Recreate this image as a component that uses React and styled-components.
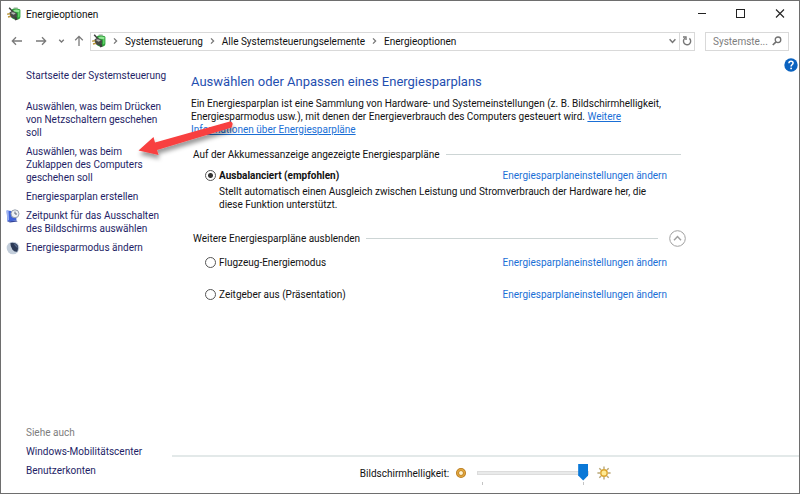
import React, { useState } from 'react';
import styled, { createGlobalStyle, css } from 'styled-components';

const colors = {
  border: '#6e6e6e',
  text: '#111111',
  navy: '#1e1e66',
  link: '#1a6fd6',
  heading: '#1f4fb0',
  muted: '#7d7d7d',
  line: '#cdd5d5',
  box: '#d9d9d9',
  accent: '#0a78d7',
};

const GlobalStyle = createGlobalStyle`
  * {
    box-sizing: border-box;
  }

  body {
    margin: 0;
    background: #ffffff;
  }

  body, button, input {
    font-family: Roboto, 'Noto Sans', sans-serif;
    font-size: 10px;
    line-height: 13px;
    color: ${colors.text};
  }
`;

const Window = styled.div`
  position: relative;
  display: flex;
  flex-direction: column;
  min-height: 100vh;
  border: 1px solid ${colors.border};
  background: #ffffff;
`;

const IconButton = styled.button`
  display: flex;
  align-items: center;
  justify-content: center;
  flex: none;
  width: ${({ $width }) => $width || 18}px;
  height: ${({ $height }) => $height || 18}px;
  padding: 0;
  border: 0;
  background: none;
`;

const TitleBar = styled.header`
  display: flex;
  align-items: center;
  height: 26px;
  padding-left: 6px;
`;

const Title = styled.h1`
  flex: 1;
  margin: 0 0 0 5px;
  font-size: 10px;
  font-weight: 400;
`;

const NavBar = styled.nav`
  display: flex;
  align-items: center;
  height: 28px;
  padding: 0 10px 0 7px;
`;

const NavButtons = styled.div`
  display: flex;
  align-items: center;
  gap: 6px;
  padding-right: 4px;
`;

const AddressBar = styled.div`
  display: flex;
  flex: 1;
  align-items: center;
  height: 19px;
  margin-right: 10px;
  padding-left: 1px;
  border: 1px solid ${colors.box};
`;

const Crumbs = styled.ol`
  display: flex;
  flex: 1;
  align-items: center;
  margin: 0;
  padding: 0;
  list-style: none;
`;

const Crumb = styled.li`
  display: flex;
  align-items: center;

  svg {
    margin: 0 6px;
  }

  a {
    color: inherit;
    text-decoration: none;
  }
`;

const RefreshButton = styled(IconButton)`
  height: 17px;
  border-left: 1px solid ${colors.box};
`;

const SearchBox = styled.label`
  display: flex;
  align-items: center;
  width: 84px;
  height: 19px;
  padding: 0 6px 0 7px;
  border: 1px solid ${colors.box};
`;

const SearchInput = styled.input`
  flex: 1;
  min-width: 0;
  padding: 0;
  border: 0;
  outline: 0;
  background: none;

  &::placeholder {
    color: ${colors.muted};
    opacity: 1;
  }
`;

const Body = styled.div`
  display: flex;
  flex: 1;
`;

const Sidebar = styled.aside`
  display: flex;
  flex-direction: column;
  justify-content: space-between;
  flex: none;
  width: 171px;
  padding: 14px 0 16px 5px;
`;

const LinkList = styled.ul`
  display: flex;
  flex-direction: column;
  gap: 6px;
  margin: 0;
  padding: 0;
  list-style: none;
`;

const SideItem = styled.li`
  display: grid;
  grid-template-columns: 14px 1fr;
  column-gap: 6px;
  color: ${colors.muted};
  ${({ $home }) => $home && css`margin-bottom: 12px;`}

  a {
    grid-column: 2;
    color: ${colors.navy};
    text-decoration: none;
    white-space: pre-line;
  }

  span {
    grid-column: 2;
  }
`;

const RightPane = styled.div`
  display: flex;
  flex: 1;
  flex-direction: column;
  min-width: 0;
`;

const Content = styled.div`
  display: flex;
  flex: 1;
  justify-content: space-between;
  padding: 2px 1px 0 19px;
`;

const Main = styled.main`
  flex: 1;
  max-width: 495px;
  padding-top: 16px;
`;

const Heading = styled.h2`
  margin: 0 0 6px;
  font-size: 13px;
  font-weight: 400;
  line-height: 18px;
  color: ${colors.heading};
`;

const Intro = styled.p`
  margin: 0 0 10px;
  white-space: pre-line;

  a {
    color: ${colors.link};
  }
`;

const GroupHeader = styled.div`
  display: flex;
  align-items: center;
  gap: 6px;
  height: 16px;
  padding-left: 2px;
`;

const Rule = styled.hr`
  flex: 1;
  height: 1px;
  margin: 0 5px 0 0;
  border: 0;
  background: ${colors.line};
`;

const PlanRow = styled.div`
  display: grid;
  grid-template-columns: 11px 1fr auto;
  column-gap: 3px;
  row-gap: 3px;
  align-items: center;
  margin-bottom: 19px;
  padding: 0 19px 0 14px;

  a {
    color: ${colors.link};
    text-decoration: none;
  }
`;

const Radio = styled.input`
  appearance: none;
  width: 11px;
  height: 11px;
  margin: 0;
  border: 1px solid #555555;
  border-radius: 50%;
  background: #ffffff;

  &:checked {
    background: radial-gradient(circle, #333333 0 2px, #ffffff 3px);
  }
`;

const PlanLabel = styled.label`
  font-weight: ${({ $strong }) => ($strong ? 700 : 400)};
`;

const PlanText = styled.p`
  grid-column: 2 / -1;
  margin: 0;
  white-space: pre-line;
`;

const PlanList = styled.div`
  padding-top: ${({ $top }) => $top}px;
`;

const Footer = styled.footer`
  display: flex;
  align-items: center;
  justify-content: center;
  gap: 6px;
  height: 38px;
  padding-bottom: 4px;
  border-top: 2px solid #e3e9e9;
`;

const SliderBox = styled.div`
  display: flex;
  flex-direction: column;
  gap: 1px;
  width: 112px;
  margin: 3px 2px 0 4px;
`;

const Slider = styled.input`
  appearance: none;
  width: 100%;
  height: 17px;
  margin: 0;
  background: none;

  &::-webkit-slider-runnable-track {
    height: 4px;
    border: 1px solid #dcdcdc;
    background: #e9eaea;
  }

  &::-webkit-slider-thumb {
    appearance: none;
    width: 10px;
    height: 17px;
    margin-top: -8px;
    background: ${colors.accent};
    clip-path: polygon(0 0, 100% 0, 100% 70%, 50% 100%, 0 70%);
  }
`;

const Ticks = styled.div`
  height: 3px;
  margin: 0 5px;
  border: solid #c4c4c4;
  border-width: 0 1px;
`;

const Arrow = styled.svg`
  position: absolute;
  left: 130px;
  top: 114px;
  pointer-events: none;
`;

const PowerIcon = () => (
  <svg width="14" height="14" viewBox="0 0 14 14" aria-hidden="true">
    <rect x="6.5" y="0.3" width="4.5" height="2.4" rx="1" fill="#b9c4b9" />
    <path d="M4.8 3Q5 1.6 9 1.6Q13.2 1.6 13.4 3.4V10Q13 12.8 9.4 12.8Q5.6 12.6 4.8 10.6Z" fill="#2fa03c" />
    <path d="M6.4 3.2Q9.2 2 12.6 3.3L12.2 5.8Q9.4 4.4 6.8 4.8Z" fill="#93e795" />
    <path d="M11 6L12.6 5.4V9.6L11 10.6Z" fill="#5fd066" />
    <path d="M2.2 0.8L5.6 4.4" stroke="#3c3f3c" strokeWidth="1.5" />
    <path d="M2.4 5.8Q4 3.6 6.6 4.2L10 6.6Q10.6 9.4 8 11Q5 11.6 3.2 9.8Z" fill="#474a47" />
    <path d="M3.8 6Q5.4 4.6 7.6 5.8L8.6 6.8L6.4 7.8Z" fill="#b4b7b4" />
    <path d="M0.2 7.2L3.2 6.6M1 10L4 9.2" stroke="#b9973a" strokeWidth="1.4" />
    <path d="M7 10.8L9.6 9.4L10.6 12.4L8.4 13.4Z" fill="#3d403d" />
  </svg>
);

const DisplayTimerIcon = () => (
  <svg width="14" height="14" viewBox="0 0 14 14" aria-hidden="true">
    <path d="M0.6 1.6L10.4 2.4V11.4L1.4 12.4Z" fill="#3f63d8" />
    <path d="M0.6 1.6L2.6 1.8L3 10.6L1.4 12.4Z" fill="#9db2f2" />
    <path d="M1.4 12.4L10.4 11.4L11.6 12.6L4 13.4Z" fill="#33449a" />
    <circle cx="9" cy="4.8" r="4" fill="#eef1f4" stroke="#98a0ad" />
    <path d="M9 2.6V5H11" fill="none" stroke="#5d6678" />
  </svg>
);

const MoonIcon = () => (
  <svg width="14" height="14" viewBox="0 0 14 14" aria-hidden="true">
    <circle cx="7" cy="7" r="6.3" fill="#c3cedb" />
    <path d="M4.4 2Q9 1 11.6 4Q13 7.4 11.4 10.6Q8.6 11.4 6.4 8.6Q4.2 5.6 4.4 2Z" fill="#2b3956" />
    <path d="M7.4 2.2Q11.2 3 11.8 7.4Q9.4 6 7.4 2.2Z" fill="#566a8c" />
  </svg>
);

const Chevron = ({ d = 'M2 1.4L4.6 4L2 6.6', weight = 1.3 }) => (
  <svg width="7" height="8" viewBox="0 0 7 8" fill="none" stroke="#777" strokeWidth={weight} aria-hidden="true">
    <path d={d} />
  </svg>
);

const NavArrow = ({ d }) => (
  <svg width="12" height="12" viewBox="0 0 12 12" fill="none" stroke="#7a7a7a" strokeWidth="1.3" aria-hidden="true">
    <path d={d} />
  </svg>
);

const RefreshIcon = () => (
  <svg width="10" height="10" viewBox="0 0 10 10" fill="none" stroke="#777" strokeWidth="1.4" aria-hidden="true">
    <path d="M7.4 2.4A3.6 3.6 0 1 1 3 2.2" />
    <path d="M1 1H4V4" />
  </svg>
);

const SearchIcon = () => (
  <svg width="10" height="10" viewBox="0 0 10 10" fill="none" stroke="#707070" aria-hidden="true">
    <circle cx="6" cy="3.8" r="2.8" strokeWidth="1.3" />
    <path d="M4 5.8L0.8 9" strokeWidth="1.7" />
  </svg>
);

const HelpIcon = () => (
  <svg width="14" height="14" viewBox="0 0 14 14" aria-hidden="true">
    <circle cx="7" cy="7" r="6.7" fill="#0b63c0" />
    <path d="M4.9 5.2Q5 3.3 7 3.3Q9.1 3.3 9.1 5.1Q9.1 6.2 7.9 6.8Q7.1 7.3 7.1 8.4" fill="none" stroke="#fff" strokeWidth="1.5" />
    <circle cx="7.1" cy="10.4" r="0.9" fill="#fff" />
  </svg>
);

const DimIcon = () => (
  <svg width="12" height="12" viewBox="0 0 12 12" aria-hidden="true">
    <circle cx="6" cy="6" r="3.5" fill="#fff3cf" stroke="#b87a1c" strokeWidth="3" />
    <circle cx="6" cy="6" r="3.4" fill="none" stroke="#e0a63f" strokeWidth="1.6" />
  </svg>
);

const SunIcon = () => (
  <svg width="14" height="14" viewBox="0 0 14 14" aria-hidden="true">
    <path
      d="M7 0.4V3M7 11V13.6M0.4 7H3M11 7H13.6M2.3 2.3L4.1 4.1M9.9 9.9L11.7 11.7M2.3 11.7L4.1 9.9M9.9 4.1L11.7 2.3"
      stroke="#b9a878"
      strokeWidth="1.4"
    />
    <circle cx="7" cy="7" r="3.2" fill="#ffeb94" stroke="#dba32c" strokeWidth="1.4" />
  </svg>
);

const TASKS = [
  { text: 'Startseite der Systemsteuerung', home: true },
  { text: 'Auswählen, was beim Drücken\nvon Netzschaltern geschehen\nsoll' },
  { text: 'Auswählen, was beim\nZuklappen des Computers\ngeschehen soll' },
  { text: 'Energiesparplan erstellen' },
  { text: 'Zeitpunkt für das Ausschalten\ndes Bildschirms auswählen', Icon: DisplayTimerIcon },
  { text: 'Energiesparmodus ändern', Icon: MoonIcon },
];

const CRUMBS = ['Systemsteuerung', 'Alle Systemsteuerungselemente', 'Energieoptionen'];

const Plan = ({ id, name, text, strong, selected, onSelect }) => (
  <PlanRow>
    <Radio type="radio" name="plan" id={id} checked={selected === id} onChange={() => onSelect(id)} />
    <PlanLabel htmlFor={id} $strong={strong}>{name}</PlanLabel>
    <a href="#plan">Energiesparplaneinstellungen ändern</a>
    {text && <PlanText>{text}</PlanText>}
  </PlanRow>
);

const App = () => {
  const [selected, setSelected] = useState('balanced');
  const [brightness, setBrightness] = useState(100);

  return (
    <Window>
      <GlobalStyle />
      <TitleBar>
        <PowerIcon />
        <Title>Energieoptionen</Title>
        <IconButton $width={39} aria-label="Minimieren">
          <svg width="10" height="10" viewBox="0 0 10 10"><path d="M1 4.5H9" stroke="#222" /></svg>
        </IconButton>
        <IconButton $width={39} aria-label="Maximieren">
          <svg width="10" height="10" viewBox="0 0 10 10"><rect x="0.5" y="0.5" width="8" height="8" fill="none" stroke="#222" /></svg>
        </IconButton>
        <IconButton $width={39} aria-label="Schließen">
          <svg width="10" height="10" viewBox="0 0 10 10"><path d="M1 0.5L9 8.5M9 0.5L1 8.5" stroke="#222" strokeWidth="1.1" /></svg>
        </IconButton>
      </TitleBar>

      <NavBar>
        <NavButtons>
          <IconButton aria-label="Zurück"><NavArrow d="M11 6H1.5M5 2.2L1.3 6L5 9.8" /></IconButton>
          <IconButton aria-label="Vorwärts"><NavArrow d="M1 6H10.5M7 2.2L10.7 6L7 9.8" /></IconButton>
          <IconButton $width={10} aria-label="Verlauf"><Chevron d="M1.2 2.8L3.5 5L5.8 2.8" /></IconButton>
          <IconButton $width={14} aria-label="Nach oben"><NavArrow d="M6 11V1.5M2.2 5.2L6 1.4L9.8 5.2" /></IconButton>
        </NavButtons>
        <AddressBar>
          <PowerIcon />
          <Crumbs>
            {CRUMBS.map((name) => (
              <Crumb key={name}>
                <Chevron />
                <a href="#crumb">{name}</a>
              </Crumb>
            ))}
          </Crumbs>
          <IconButton $width={14} aria-label="Vorherige Orte"><Chevron d="M0.6 2.2L3.5 5.4L6.4 2.2" weight={1.5} /></IconButton>
          <RefreshButton $width={15} aria-label="Aktualisieren"><RefreshIcon /></RefreshButton>
        </AddressBar>
        <SearchBox>
          <SearchInput placeholder="Systemste..." aria-label="Suchen" />
          <SearchIcon />
        </SearchBox>
      </NavBar>

      <Body>
        <Sidebar>
          <LinkList>
            {TASKS.map(({ text, home, Icon }) => (
              <SideItem key={text} $home={home}>
                {Icon && <Icon />}
                <a href="#task">{text}</a>
              </SideItem>
            ))}
          </LinkList>
          <LinkList>
            <SideItem><span>Siehe auch</span></SideItem>
            <SideItem><a href="#mobility">Windows-Mobilitätscenter</a></SideItem>
            <SideItem><a href="#accounts">Benutzerkonten</a></SideItem>
          </LinkList>
        </Sidebar>

        <RightPane>
          <Content>
            <Main>
              <Heading>Auswählen oder Anpassen eines Energiesparplans</Heading>
              <Intro>
                {'Ein Energiesparplan ist eine Sammlung von Hardware- und Systemeinstellungen (z. B. Bildschirmhelligkeit,\nEnergiesparmodus usw.), mit denen der Energieverbrauch des Computers gesteuert wird. '}
                <a href="#info">{'Weitere\nInformationen über Energiesparpläne'}</a>
              </Intro>

              <GroupHeader>
                <span>Auf der Akkumessanzeige angezeigte Energiesparpläne</span>
                <Rule />
              </GroupHeader>
              <PlanList $top={7}>
                <Plan
                  id="balanced"
                  name="Ausbalanciert (empfohlen)"
                  text={'Stellt automatisch einen Ausgleich zwischen Leistung und Stromverbrauch der Hardware her, die\ndiese Funktion unterstützt.'}
                  strong
                  selected={selected}
                  onSelect={setSelected}
                />
              </PlanList>

              <GroupHeader>
                <span>Weitere Energiesparpläne ausblenden</span>
                <Rule />
                <IconButton $width={17} $height={17} aria-label="Ausblenden">
                  <svg width="17" height="17" viewBox="0 0 17 17" fill="none" stroke="#a0a0a0">
                    <circle cx="8.5" cy="8.5" r="7.8" />
                    <path d="M5 10.2L8.5 6.6L12 10.2" strokeWidth="1.5" />
                  </svg>
                </IconButton>
              </GroupHeader>
              <PlanList $top={10}>
                <Plan id="flight" name="Flugzeug-Energiemodus" selected={selected} onSelect={setSelected} />
                <Plan id="presentation" name="Zeitgeber aus (Präsentation)" selected={selected} onSelect={setSelected} />
              </PlanList>
            </Main>
            <IconButton $width={15} $height={15} aria-label="Hilfe"><HelpIcon /></IconButton>
          </Content>

          <Footer>
            <label htmlFor="brightness">Bildschirmhelligkeit:</label>
            <DimIcon />
            <SliderBox>
              <Slider
                id="brightness"
                type="range"
                min="0"
                max="100"
                value={brightness}
                onChange={(e) => setBrightness(Number(e.target.value))}
              />
              <Ticks />
            </SliderBox>
            <SunIcon />
          </Footer>
        </RightPane>
      </Body>

      <Arrow width="110" height="56" viewBox="0 0 110 56" aria-hidden="true">
        <defs>
          <filter id="soft" x="-20%" y="-20%" width="140%" height="160%">
            <feDropShadow dx="1" dy="4" stdDeviation="2" floodColor="#000" floodOpacity="0.4" />
          </filter>
        </defs>
        <path d="M7.5 35.5L22.5 22L24 27.4L98.8 6.6Q102 7 101.6 9.6L100.6 12.6L26 35L27.6 40Z" fill="#f84040" filter="url(#soft)" />
      </Arrow>
    </Window>
  );
};

export default App;
